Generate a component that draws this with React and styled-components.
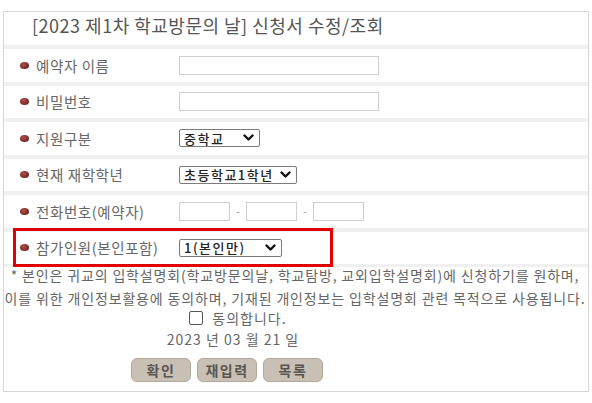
import React from "react";
import styled, { createGlobalStyle } from "styled-components";

const Global = createGlobalStyle`
  html, body { margin: 0; padding: 0; background: #fff; }
  body { font-family: "Noto Sans CJK KR", "Noto Sans", sans-serif; }
`;

const Page = styled.div`
  width: 592px;
  height: 403px;
  padding: 11px 0 0 3px;
  box-sizing: border-box;
`;

const Panel = styled.div`
  width: 586px;
  height: 381px;
  box-sizing: border-box;
  border: 1px solid #d6d6d6;
  display: flex;
  flex-direction: column;
`;

const Title = styled.div`
  height: 33px;
  box-sizing: border-box;
  padding: 0 0 7px 28px;
  display: flex;
  align-items: center;
  font-size: 18px;
  color: #555;
  letter-spacing: 0.5px;
`;

const Row = styled.div`
  position: relative;
  display: grid;
  grid-template-columns: 175px 1fr;
  align-items: center;
  height: 36.5px;
  box-sizing: border-box;
  border-top: 4px solid #f0f0f0;
  ${(p) => p.$last && `border-bottom: 3px solid #f0f0f0; height: 39.5px;`}
`;

const Label = styled.div`
  display: flex;
  align-items: center;
  gap: 7px;
  padding-left: 16px;
  font-size: 14.5px;
  color: #666;
  letter-spacing: 0.6px;
`;

const Dot = styled.span`
  width: 9px;
  height: 7px;
  border-radius: 50%;
  background: radial-gradient(circle at 40% 35%, #b0504a 0%, #7d2c28 60%, #5c1e1b 100%);
  flex: none;
`;

const Controls = styled.div`
  display: flex;
  align-items: center;
`;

const TextInput = styled.div`
  width: ${(p) => p.$w}px;
  height: 19px;
  box-sizing: border-box;
  border: 1px solid #cfcfcf;
  background: #fff;
`;

const Dash = styled.span`
  width: 16px;
  text-align: center;
  font-size: 11px;
  color: #999;
`;

const Select = styled.div`
  width: ${(p) => p.$w}px;
  height: 18px;
  box-sizing: border-box;
  border: 1px solid #7a7a7a;
  border-radius: 2px;
  display: flex;
  align-items: center;
  justify-content: space-between;
  padding: 0 5px 0 4px;
  font-size: 13px;
  font-weight: 500;
  color: #222;
  letter-spacing: 1.5px;
`;

const Highlight = styled.div`
  position: absolute;
  left: 9px;
  top: -4px;
  width: 320px;
  height: 39px;
  box-sizing: border-box;
  border: 3px solid #e00000;
  pointer-events: none;
`;

const Notice = styled.div`
  width: 586px;
  margin: -3px 0 0 -2px;
  text-align: center;
  font-size: 14px;
  line-height: 23px;
  color: #666;
  letter-spacing: 0.85px;
  white-space: nowrap;
`;

const Bottom = styled.div`
  width: 446px;
  display: flex;
  flex-direction: column;
  align-items: center;
`;

const Agree = styled.label`
  display: flex;
  align-items: center;
  gap: 9px;
  height: 16px;
  padding-left: 22px;
  font-size: 14px;
  color: #666;
  letter-spacing: 1px;
`;

const Box = styled.span`
  width: 12px;
  height: 12px;
  border: 1px solid #555;
  border-radius: 2px;
  background: #fff;
`;

const DateLine = styled.div`
  height: 26px;
  line-height: 26px;
  padding-left: 12px;
  font-size: 14px;
  color: #666;
  letter-spacing: 1px;
`;

const Buttons = styled.div`
  display: flex;
  gap: 6px;
  margin-top: 6px;
`;

const Button = styled.div`
  width: 60px;
  height: 24px;
  box-sizing: border-box;
  border: 1px solid #b3a89c;
  border-radius: 6px;
  background: #c9c0b5;
  display: flex;
  align-items: center;
  justify-content: center;
  font-size: 14px;
  font-weight: 700;
  color: #5a5550;
  letter-spacing: 1.5px;
`;

const Chevron = () => (
  <svg width="11" height="8" viewBox="0 0 11 8">
    <path d="M1.5 1.5 L5.5 5.5 L9.5 1.5" fill="none" stroke="#111" strokeWidth="2.4" strokeLinecap="round" strokeLinejoin="round" />
  </svg>
);

const Field = ({ label, children, last, highlight }) => (
  <Row $last={last}>
    <Label>
      <Dot />
      {label}
    </Label>
    <Controls>{children}</Controls>
    {highlight && <Highlight />}
  </Row>
);

export default function App() {
  return (
    <Page>
      <Global />
      <Panel>
        <Title>[2023 제1차 학교방문의 날] 신청서 수정/조회</Title>
        <Field label="예약자 이름">
          <TextInput $w={200} />
        </Field>
        <Field label="비밀번호">
          <TextInput $w={200} />
        </Field>
        <Field label="지원구분">
          <Select $w={81}>
            중학교 <Chevron />
          </Select>
        </Field>
        <Field label="현재 재학학년">
          <Select $w={118}>
            초등학교1학년 <Chevron />
          </Select>
        </Field>
        <Field label="전화번호(예약자)">
          <TextInput $w={51} />
          <Dash>-</Dash>
          <TextInput $w={51} />
          <Dash>-</Dash>
          <TextInput $w={51} />
        </Field>
        <Field label="참가인원(본인포함)" last highlight>
          <Select $w={103}>
            1(본인만) <Chevron />
          </Select>
        </Field>
        <Notice>
          * 본인은 귀교의 입학설명회(학교방문의날, 학교탐방, 교외입학설명회)에 신청하기를 원하며,
          <br />
          이를 위한 개인정보활용에 동의하며, 기재된 개인정보는 입학설명회 관련 목적으로 사용됩니다.
        </Notice>
        <Bottom>
          <Agree>
            <Box />
            동의합니다.
          </Agree>
          <DateLine>2023 년 03 월 21 일</DateLine>
          <Buttons>
            <Button>확인</Button>
            <Button>재입력</Button>
            <Button>목록</Button>
          </Buttons>
        </Bottom>
      </Panel>
    </Page>
  );
}
